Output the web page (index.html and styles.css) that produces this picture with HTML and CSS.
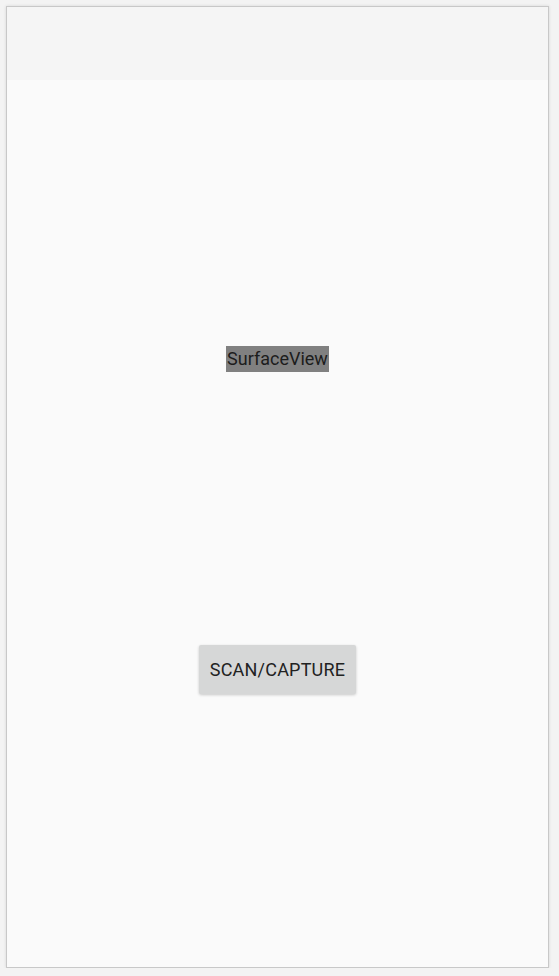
FILE: index.html
```html
<!DOCTYPE html>
<html>
<head>
<meta charset="utf-8">
<link rel="stylesheet" href="styles.css">
</head>
<body>
<div class="device">
  <div class="appbar"></div>
  <div class="content">
    <div class="surface">SurfaceView</div>
    <button class="btn">SCAN/CAPTURE</button>
  </div>
</div>
</body>
</html>
```
FILE: styles.css
```css
html, body {
  margin: 0;
  padding: 0;
  background: #f3f3f3;
  font-family: Roboto, "Noto Sans", sans-serif;
}
body {
  padding: 6px 0 0 6px;
}
.device {
  width: 541px;
  height: 960px;
  border: 1px solid #c8c8c8;
  box-shadow: 0 0 3px rgba(0,0,0,0.12);
  background: #fafafa;
  display: flex;
  flex-direction: column;
}
.appbar {
  height: 73px;
  background: #f5f5f5;
  flex: none;
}
.content {
  flex: 1;
  display: flex;
  flex-direction: column;
  align-items: center;
  padding-top: 266px;
}
.surface {
  background: #808080;
  color: #1c1c1c;
  font-size: 18px;
  height: 26px;
  line-height: 26px;
  padding: 0 1px;
}
.btn {
  margin-top: 273px;
  height: 49px;
  padding: 0 11px;
  border: none;
  border-radius: 2px;
  background: #d6d7d7;
  box-shadow: 0 1px 3px rgba(0,0,0,0.2);
  color: #222;
  font-family: Roboto, sans-serif;
  font-size: 18px;
  font-weight: 400;
  letter-spacing: 0.2px;
}
```
